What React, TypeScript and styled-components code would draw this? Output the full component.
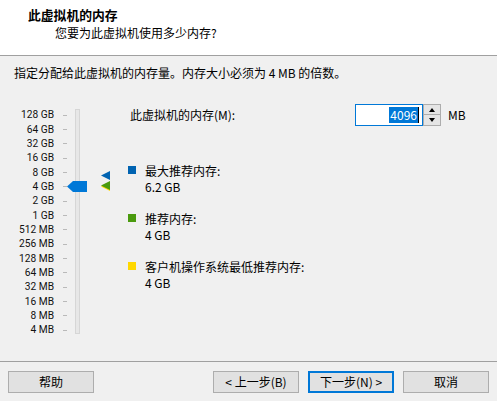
import styled, { createGlobalStyle } from 'styled-components';

const GlobalStyle = createGlobalStyle`
  html, body {
    margin: 0;
    padding: 0;
    background: #f0f0f0;
  }
  body {
    font-family: "Noto Sans CJK SC", "Noto Sans", sans-serif;
    font-size: 12px;
    color: #000;
  }
`;

const Window = styled.div`
  width: 497px;
  height: 401px;
  display: flex;
  flex-direction: column;
  background: #f0f0f0;
  overflow: hidden;
`;

const Header = styled.div`
  height: 56px;
  box-sizing: border-box;
  padding-top: 7px;
  background: #ffffff;
  border-bottom: 1px solid #a0a0a0;
`;

const Title = styled.div`
  padding-left: 28px;
  font-size: 12.8px;
  font-weight: 700;
  line-height: 16px;
`;

const Subtitle = styled.div`
  padding-left: 55px;
  margin-top: 2px;
  line-height: 16px;
`;

const Instruction = styled.div`
  padding: 9px 0 0 14px;
  line-height: 16px;
`;

const Main = styled.div`
  flex: 1;
  display: flex;
`;

const SliderArea = styled.div`
  width: 128px;
  display: flex;
`;

const Scale = styled.div`
  width: 67px;
  padding-top: 27px;
  display: flex;
  flex-direction: column;
`;

const ScaleRow = styled.div`
  height: 14.35px;
  display: flex;
  align-items: center;
  justify-content: flex-end;
  gap: 9px;
  font-family: Roboto, "Noto Sans", sans-serif;
  font-size: 10.2px;
  line-height: 12px;
  color: #111;
  white-space: nowrap;
`;

const Tick = styled.span`
  width: 4px;
  height: 1px;
  background: #b9b9b9;
`;

const Track = styled.div`
  position: relative;
  margin: 28px 0 0 8px;
  width: 5px;
  height: 225px;
  box-sizing: border-box;
  background: #e7e7e7;
  border: 1px solid #d6d6d6;
`;

const Thumb = styled.div`
  position: absolute;
  left: -9px;
  top: 71px;
  width: 20px;
  height: 11px;
  background: #0078d7;
  clip-path: polygon(0 50%, 6px 0, 100% 0, 100% 100%, 6px 100%);
`;

const Marker = styled.div<{ $color: string; $top: number }>`
  position: absolute;
  left: 25px;
  top: ${p => p.$top}px;
  width: 9px;
  height: 9px;
  background: ${p => p.$color};
  clip-path: polygon(0 50%, 100% 0, 100% 100%);
`;

const RightPanel = styled.div`
  flex: 1;
  padding-top: 23px;
  display: flex;
  flex-direction: column;
`;

const MemoryRow = styled.div`
  display: flex;
  align-items: center;
  height: 22px;
`;

const MemoryLabel = styled.span`
  width: 225px;
  padding-left: 2px;
  line-height: 16px;
`;

const Input = styled.div`
  width: 68px;
  height: 22px;
  box-sizing: border-box;
  border: 1px solid #0078d7;
  background: #fff;
  display: flex;
  align-items: center;
  justify-content: flex-end;
  padding-right: 3px;
`;

const Selected = styled.span`
  background: #0078d7;
  color: #fff;
  line-height: 16px;
  padding: 0 1px;
`;

const Caret = styled.span`
  width: 1px;
  height: 16px;
  background: #000;
`;

const Spinner = styled.div`
  width: 18px;
  height: 22px;
  display: flex;
  flex-direction: column;
`;

const SpinButton = styled.div<{ $up?: boolean }>`
  height: 11px;
  box-sizing: border-box;
  border: 1px solid #adadad;
  border-top-width: ${p => (p.$up ? 1 : 0)}px;
  background: #e5e5e5;
  display: flex;
  align-items: center;
  justify-content: center;

  &::after {
    content: '';
    width: 0;
    height: 0;
    border-left: 3.5px solid transparent;
    border-right: 3.5px solid transparent;
    ${p => (p.$up ? 'border-bottom: 4px solid #000;' : 'border-top: 4px solid #000;')}
  }
`;

const Unit = styled.span`
  margin-left: 7px;
  line-height: 16px;
`;

const Legend = styled.div`
  margin-top: 37px;
  display: flex;
  flex-direction: column;
  gap: 16px;
`;

const LegendItem = styled.div`
  display: grid;
  grid-template-columns: 8px 1fr;
  column-gap: 9px;
  line-height: 16px;
`;

const Swatch = styled.span<{ $color: string }>`
  width: 8px;
  height: 8px;
  margin-top: 3px;
  background: ${p => p.$color};
`;

const Value = styled.span`
  grid-column: 2;
`;

const Footer = styled.div`
  border-top: 1px solid #a0a0a0;
  padding: 9px 8px 8px 8px;
  display: flex;
  justify-content: space-between;
`;

const ButtonGroup = styled.div`
  display: flex;
  gap: 9px;
`;

const Button = styled.button<{ $default?: boolean }>`
  width: 86px;
  height: 22px;
  box-sizing: border-box;
  margin: 0;
  padding: 0;
  font: inherit;
  color: #000;
  background: #e1e1e1;
  border: ${p => (p.$default ? '2px solid #0078d7' : '1px solid #adadad')};
  line-height: 16px;
`;

const scale = [
  '128 GB', '64 GB', '32 GB', '16 GB', '8 GB', '4 GB', '2 GB', '1 GB',
  '512 MB', '256 MB', '128 MB', '64 MB', '32 MB', '16 MB', '8 MB', '4 MB',
];

const legend = [
  { color: '#0063b1', label: '最大推荐内存:', value: '6.2 GB' },
  { color: '#4a9a0e', label: '推荐内存:', value: '4 GB' },
  { color: '#ffd800', label: '客户机操作系统最低推荐内存:', value: '4 GB' },
];

const App = () => {
  return (
    <Window>
      <GlobalStyle />
      <Header>
        <Title>此虚拟机的内存</Title>
        <Subtitle>您要为此虚拟机使用多少内存?</Subtitle>
      </Header>
      <Instruction>指定分配给此虚拟机的内存量。内存大小必须为 4 MB 的倍数。</Instruction>

      <Main>
        <SliderArea>
          <Scale>
            {scale.map(s => (
              <ScaleRow key={s}>
                <span>{s}</span>
                <Tick />
              </ScaleRow>
            ))}
          </Scale>
          <Track>
            <Thumb />
            <Marker $color="#ffd800" $top={72} />
            <Marker $color="#0063b1" $top={61} />
            <Marker $color="#4a9a0e" $top={71} />
          </Track>
        </SliderArea>

        <RightPanel>
          <MemoryRow>
            <MemoryLabel>此虚拟机的内存(M):</MemoryLabel>
            <Input>
              <Selected>4096</Selected>
              <Caret />
            </Input>
            <Spinner>
              <SpinButton $up />
              <SpinButton />
            </Spinner>
            <Unit>MB</Unit>
          </MemoryRow>

          <Legend>
            {legend.map(item => (
              <LegendItem key={item.label}>
                <Swatch $color={item.color} />
                <span>{item.label}</span>
                <Value>{item.value}</Value>
              </LegendItem>
            ))}
          </Legend>
        </RightPanel>
      </Main>

      <Footer>
        <Button>帮助</Button>
        <ButtonGroup>
          <Button>&lt; 上一步(B)</Button>
          <Button $default>下一步(N) &gt;</Button>
          <Button>取消</Button>
        </ButtonGroup>
      </Footer>
    </Window>
  );
};

export default App;
